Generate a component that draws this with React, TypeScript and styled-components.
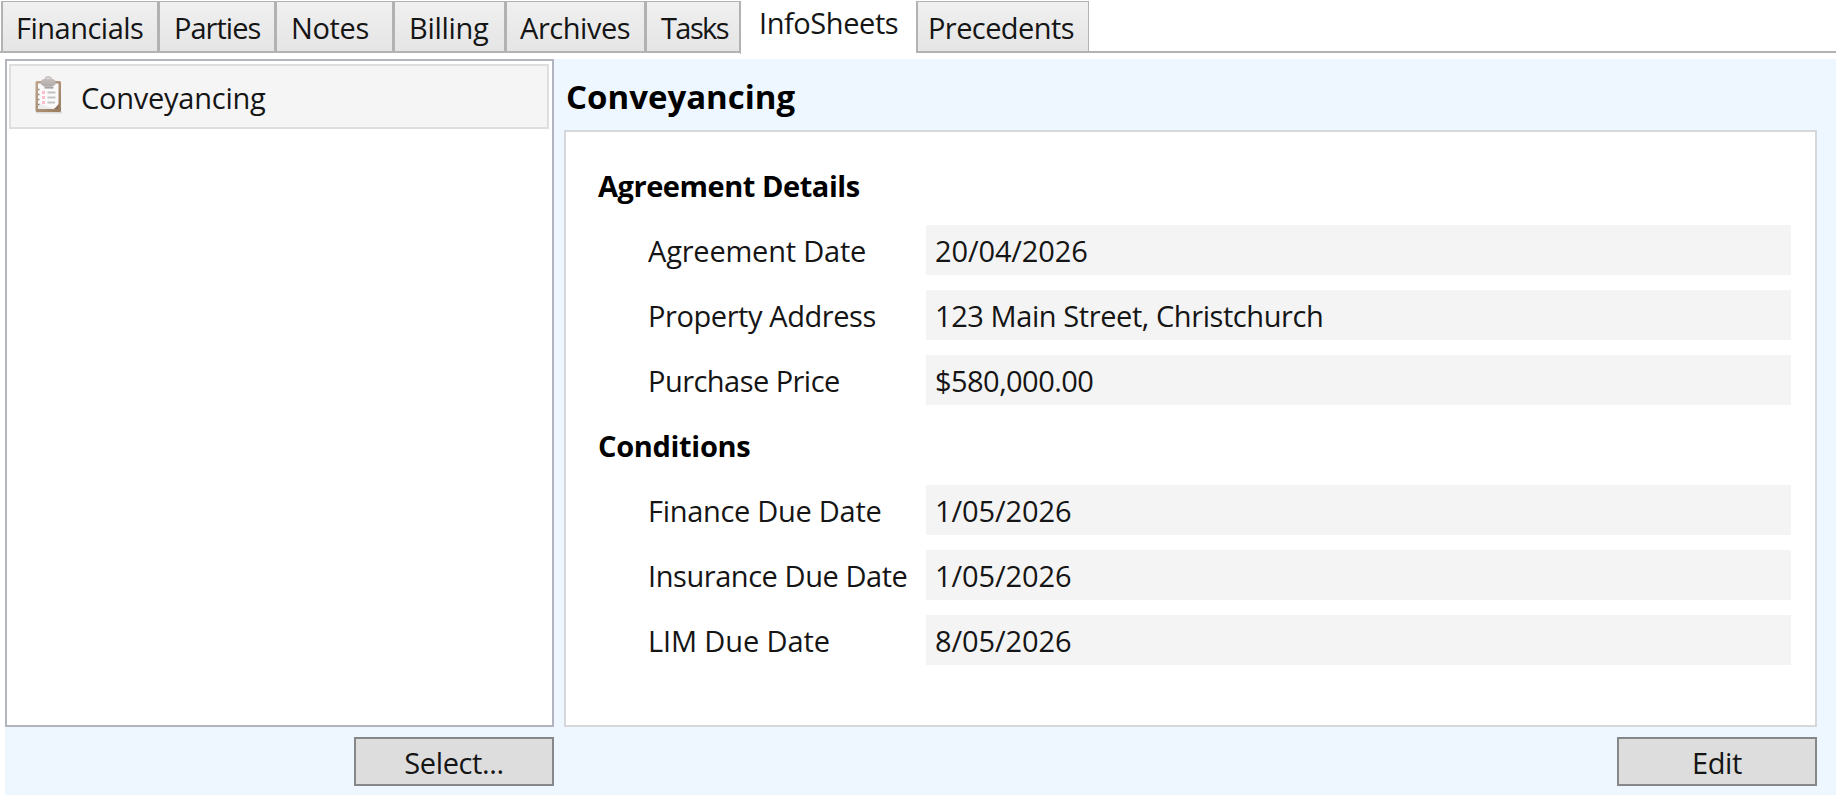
import React from "react";
import styled, { createGlobalStyle } from "styled-components";

const GlobalStyle = createGlobalStyle`
  *, *::before, *::after { box-sizing: border-box; }
  body {
    margin: 0;
    background: #fff;
    color: #151515;
    font: 400 29px/40px "Open Sans", "Noto Sans", sans-serif;
    overflow: hidden;
  }
`;

const Window = styled.div`
  display: flex;
  flex-direction: column;
  width: 1836px;
  height: 795px;
`;

const TabStrip = styled.div`
  display: flex;
  flex: none;
  height: 53px;
  padding-top: 1px;
`;

const Tab = styled.div<{ $width: number; $pad: number; $track: number; $active?: boolean }>`
  flex: none;
  width: ${(p) => p.$width}px;
  height: ${(p) => (p.$active ? 53 : 52)}px;
  padding: ${(p) => (p.$active ? "2px" : "6px")} 0 0 ${(p) => p.$pad}px;
  letter-spacing: ${(p) => p.$track}px;
  white-space: nowrap;
  border: solid #b2b2b2;
  border-width: ${(p) => (p.$active ? "0 0 0 1px" : "1px 1px 2px 2px")};
  background: ${(p) => (p.$active ? "#fff" : "linear-gradient(#f0f0f0, #e5e5e5)")};
`;

const StripRule = styled.div<{ $width?: number }>`
  ${(p) => (p.$width ? `flex: none; width: ${p.$width}px;` : "flex: 1;")}
  border-bottom: 2px solid #b2b2b2;
`;

const Body = styled.div`
  flex: 1;
  display: flex;
  gap: 10px;
  margin: 6px 0 0 5px;
  padding-right: 19px;
  background: #eef7ff;
`;

const Column = styled.div<{ $width?: number }>`
  display: flex;
  flex-direction: column;
  ${(p) => (p.$width ? `flex: none; width: ${p.$width}px;` : "flex: 1;")}
`;

const SheetList = styled.div`
  height: 668px;
  padding: 3px 3px 3px 2px;
  border: 2px solid #b3b5be;
  background: #fff;
`;

const SheetItem = styled.div`
  display: flex;
  align-items: center;
  height: 65px;
  padding: 3px 0 0 23px;
  border: 2px solid #dedede;
  background: #f5f5f5;
  letter-spacing: -0.24px;
`;

const ItemIcon = styled.svg`
  flex: none;
  width: 32px;
  height: 40px;
  margin: -7px 15px 0 0;
`;

const Title = styled.div`
  height: 71px;
  padding: 18px 0 0 2px;
  color: #000;
  font-size: 33px;
  font-weight: 700;
`;

const Sheet = styled.div`
  display: flex;
  flex-direction: column;
  gap: 15px;
  height: 597px;
  padding: 28px 24px 0 32px;
  border: 2px solid #d5d7da;
  background: #fff;
`;

const SectionName = styled.div<{ $track: number }>`
  height: 50px;
  padding-top: 6px;
  color: #000;
  font-weight: 700;
  letter-spacing: ${(p) => p.$track}px;
`;

const Row = styled.div`
  display: flex;
  height: 50px;
  padding-left: 50px;
`;

const Label = styled.div<{ $track: number }>`
  flex: none;
  width: 278px;
  padding-top: 6px;
  white-space: nowrap;
  letter-spacing: ${(p) => p.$track}px;
`;

const Value = styled.div<{ $track: number }>`
  flex: 1;
  padding: 6px 0 0 9px;
  background: #f4f4f4;
  letter-spacing: ${(p) => p.$track}px;
`;

const Button = styled.button`
  align-self: flex-end;
  width: 200px;
  height: 49px;
  margin-top: 10px;
  padding: 2px 0 0;
  border: 2px solid #858788;
  background: #ddd;
  color: #151515;
  font: inherit;
  line-height: 40px;
  letter-spacing: -0.38px;
`;

const tabs = [
  { name: "Financials", width: 157, pad: 13, track: -0.5 },
  { name: "Parties", width: 117, pad: 14, track: -0.98 },
  { name: "Notes", width: 118, pad: 14, track: -0.35 },
  { name: "Billing", width: 112, pad: 14, track: -0.3 },
  { name: "Archives", width: 140, pad: 13, track: -0.45 },
  { name: "Tasks", width: 95, pad: 14, track: -1.6 },
  { name: "InfoSheets", width: 176, pad: 18, track: -0.43, active: true },
  { name: "Precedents", width: 173, pad: 10, track: -0.58 },
];

const sections = [
  {
    name: "Agreement Details",
    track: -0.46,
    fields: [
      { label: "Agreement Date", labelTrack: -0.21, value: "20/04/2026", track: -0.12 },
      { label: "Property Address", labelTrack: -0.42, value: "123 Main Street, Christchurch", track: -0.42 },
      { label: "Purchase Price", labelTrack: -0.54, value: "$580,000.00", track: -0.55 },
    ],
  },
  {
    name: "Conditions",
    track: -0.32,
    fields: [
      { label: "Finance Due Date", labelTrack: -0.29, value: "1/05/2026", track: -0.1 },
      { label: "Insurance Due Date", labelTrack: -0.44, value: "1/05/2026", track: -0.1 },
      { label: "LIM Due Date", labelTrack: -0.12, value: "8/05/2026", track: -0.08 },
    ],
  },
];

function Clipboard() {
  return (
    <ItemIcon viewBox="0 0 32 40">
      <defs>
        <linearGradient id="board" x1="0" y1="0" x2="1" y2="1">
          <stop offset="0" stopColor="#bda58d" />
          <stop offset="1" stopColor="#9a7d60" />
        </linearGradient>
        <linearGradient id="clip" x1="0" y1="0" x2="0" y2="1">
          <stop offset="0" stopColor="#cbc6c3" />
          <stop offset="1" stopColor="#b0aaa8" />
        </linearGradient>
      </defs>
      <rect x="2" y="36" width="26" height="2.5" rx="1" fill="#dcdad8" />
      <rect x="1.5" y="6" width="25.5" height="31" rx="1.5" fill="url(#board)" />
      <path d="M4 8.5h20.5v21l-4.5 4.5H4z" fill="#fbfafa" />
      <path d="M24.5 28v6H18.5c3 0 4.5-1.5 6-6z" fill="#86705b" />
      <path d="M4 28l16 6H4z" fill="#ececec" />
      <path d="M4 14.5h1.5M4 19.5h1.5M4 24.5h1.5M4 29.5h1.5" stroke="#8d8782" strokeWidth="1.5" />
      <path d="M8 17.5h3M8 22.5h3M8 27.5h3" stroke="#ffbccb" strokeWidth="2.8" />
      <path d="M13.5 17.5h8M13.5 22.5h8M13.5 27.5h7.5" stroke="#c2c2c2" strokeWidth="2.2" />
      <path d="M10.5 12.7h9" stroke="#a5a5a5" strokeWidth="1.8" />
      <path d="M7 6.5q0-2 3.5-2.5Q11 1 14.2 1t3.8 3q3.5.5 3.5 2.5v3l-3.5 2.3h-7.5L7 9.5z" fill="url(#clip)" />
      <path d="M12.5 3.5h3.5" stroke="#dcd8d6" strokeWidth="1.5" />
    </ItemIcon>
  );
}

export default function App() {
  return (
    <Window>
      <GlobalStyle />
      <TabStrip>
        <StripRule $width={1} />
        {tabs.map((t) => (
          <Tab key={t.name} $width={t.width} $pad={t.pad} $track={t.track} $active={t.active}>
            {t.name}
          </Tab>
        ))}
        <StripRule />
      </TabStrip>
      <Body>
        <Column $width={549}>
          <SheetList>
            <SheetItem>
              <Clipboard />
              Conveyancing
            </SheetItem>
          </SheetList>
          <Button>Select...</Button>
        </Column>
        <Column>
          <Title>Conveyancing</Title>
          <Sheet>
            {sections.map((s) => (
              <React.Fragment key={s.name}>
                <SectionName $track={s.track}>{s.name}</SectionName>
                {s.fields.map((f) => (
                  <Row key={f.label}>
                    <Label $track={f.labelTrack}>{f.label}</Label>
                    <Value $track={f.track}>{f.value}</Value>
                  </Row>
                ))}
              </React.Fragment>
            ))}
          </Sheet>
          <Button>Edit</Button>
        </Column>
      </Body>
    </Window>
  );
}
